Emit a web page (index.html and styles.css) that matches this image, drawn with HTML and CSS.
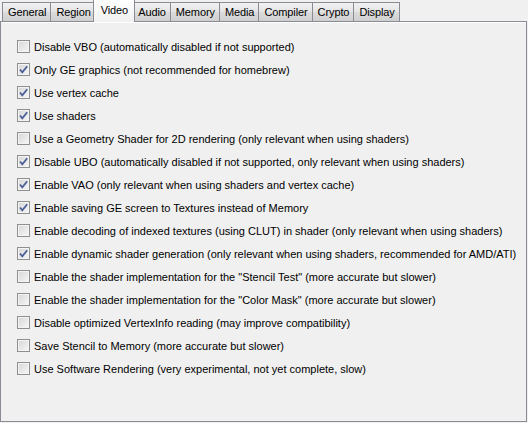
FILE: index.html
```html
<!DOCTYPE html>
<html>
<head>
<meta charset="utf-8">
<link rel="stylesheet" href="styles.css">
</head>
<body>
<div class="window">
  <div class="tabs">
    <div class="tab">General</div>
    <div class="tab">Region</div>
    <div class="tab active">Video</div>
    <div class="tab">Audio</div>
    <div class="tab">Memory</div>
    <div class="tab">Media</div>
    <div class="tab">Compiler</div>
    <div class="tab">Crypto</div>
    <div class="tab">Display</div>
  </div>
  <div class="panel">
    <label class="row"><span class="cb"></span>Disable VBO (automatically disabled if not supported)</label>
    <label class="row"><span class="cb on"><svg viewBox="0 0 11 11"><path d="M2 5.5 L4.3 8.3 L9.2 2.2"/></svg></span>Only GE graphics (not recommended for homebrew)</label>
    <label class="row"><span class="cb on"><svg viewBox="0 0 11 11"><path d="M2 5.5 L4.3 8.3 L9.2 2.2"/></svg></span>Use vertex cache</label>
    <label class="row"><span class="cb on"><svg viewBox="0 0 11 11"><path d="M2 5.5 L4.3 8.3 L9.2 2.2"/></svg></span>Use shaders</label>
    <label class="row"><span class="cb"></span>Use a Geometry Shader for 2D rendering (only relevant when using shaders)</label>
    <label class="row"><span class="cb on"><svg viewBox="0 0 11 11"><path d="M2 5.5 L4.3 8.3 L9.2 2.2"/></svg></span>Disable UBO (automatically disabled if not supported, only relevant when using shaders)</label>
    <label class="row"><span class="cb on"><svg viewBox="0 0 11 11"><path d="M2 5.5 L4.3 8.3 L9.2 2.2"/></svg></span>Enable VAO (only relevant when using shaders and vertex cache)</label>
    <label class="row"><span class="cb on"><svg viewBox="0 0 11 11"><path d="M2 5.5 L4.3 8.3 L9.2 2.2"/></svg></span>Enable saving GE screen to Textures instead of Memory</label>
    <label class="row"><span class="cb"></span>Enable decoding of indexed textures (using CLUT) in shader (only relevant when using shaders)</label>
    <label class="row"><span class="cb on"><svg viewBox="0 0 11 11"><path d="M2 5.5 L4.3 8.3 L9.2 2.2"/></svg></span>Enable dynamic shader generation (only relevant when using shaders, recommended for AMD/ATI)</label>
    <label class="row"><span class="cb"></span>Enable the shader implementation for the "Stencil Test" (more accurate but slower)</label>
    <label class="row"><span class="cb"></span>Enable the shader implementation for the "Color Mask" (more accurate but slower)</label>
    <label class="row"><span class="cb"></span>Disable optimized VertexInfo reading (may improve compatibility)</label>
    <label class="row"><span class="cb"></span>Save Stencil to Memory (more accurate but slower)</label>
    <label class="row"><span class="cb"></span>Use Software Rendering (very experimental, not yet complete, slow)</label>
  </div>
</div>
</body>
</html>
```

FILE: styles.css
```css
html, body {
  margin: 0;
  padding: 0;
  background: #f0f0f0;
}
body {
  font-family: "Liberation Sans", Arial, sans-serif;
  font-size: 11px;
  color: #000;
  width: 528px;
  height: 423px;
  overflow: hidden;
}
.window {
  display: flex;
  flex-direction: column;
  width: 527px;
}
.tabs {
  display: flex;
  align-items: flex-end;
  height: 21px;
  padding-left: 2px;
  position: relative;
  z-index: 2;
}
.tab {
  height: 18px;
  line-height: 18px;
  padding: 0 4px 0 5px;
  border: 1px solid #898c95;
  border-bottom: none;
  background: linear-gradient(#f2f2f2, #e3e3e3 50%, #dbdbdb 51%, #cfcfcf);
  margin-right: -1px;
  letter-spacing: -0.1px;
}
.tab.active {
  line-height: 20px;
  padding: 0 6px 0 7px;
  margin-left: -2px;
  margin-right: -3px;
  background: linear-gradient(#ffffff, #f0f0f0);
  position: relative;
  z-index: 3;
  height: 22px;
  margin-bottom: -1px;
}
.panel {
  border: 1px solid #898c95;
  box-shadow: inset 0 1px 0 #ffffff;
  background: #f0f0f0;
  display: flex;
  flex-direction: column;
  padding: 13px 0 0 16px;
  height: 386px;
}
.row {
  display: flex;
  align-items: center;
  height: 23px;
  white-space: nowrap;
}
.cb {
  width: 11px;
  height: 11px;
  border: 1px solid #8e8f8f;
  background: linear-gradient(135deg, #d6d6d6, #f7f7f7);
  box-shadow: inset 0 0 0 1px #f4f4f4;
  margin-right: 4px;
  flex: none;
  display: flex;
}
.cb svg {
  width: 11px;
  height: 11px;
}
.cb path {
  fill: none;
  stroke: #4a5f97;
  stroke-width: 1.8;
}
```
